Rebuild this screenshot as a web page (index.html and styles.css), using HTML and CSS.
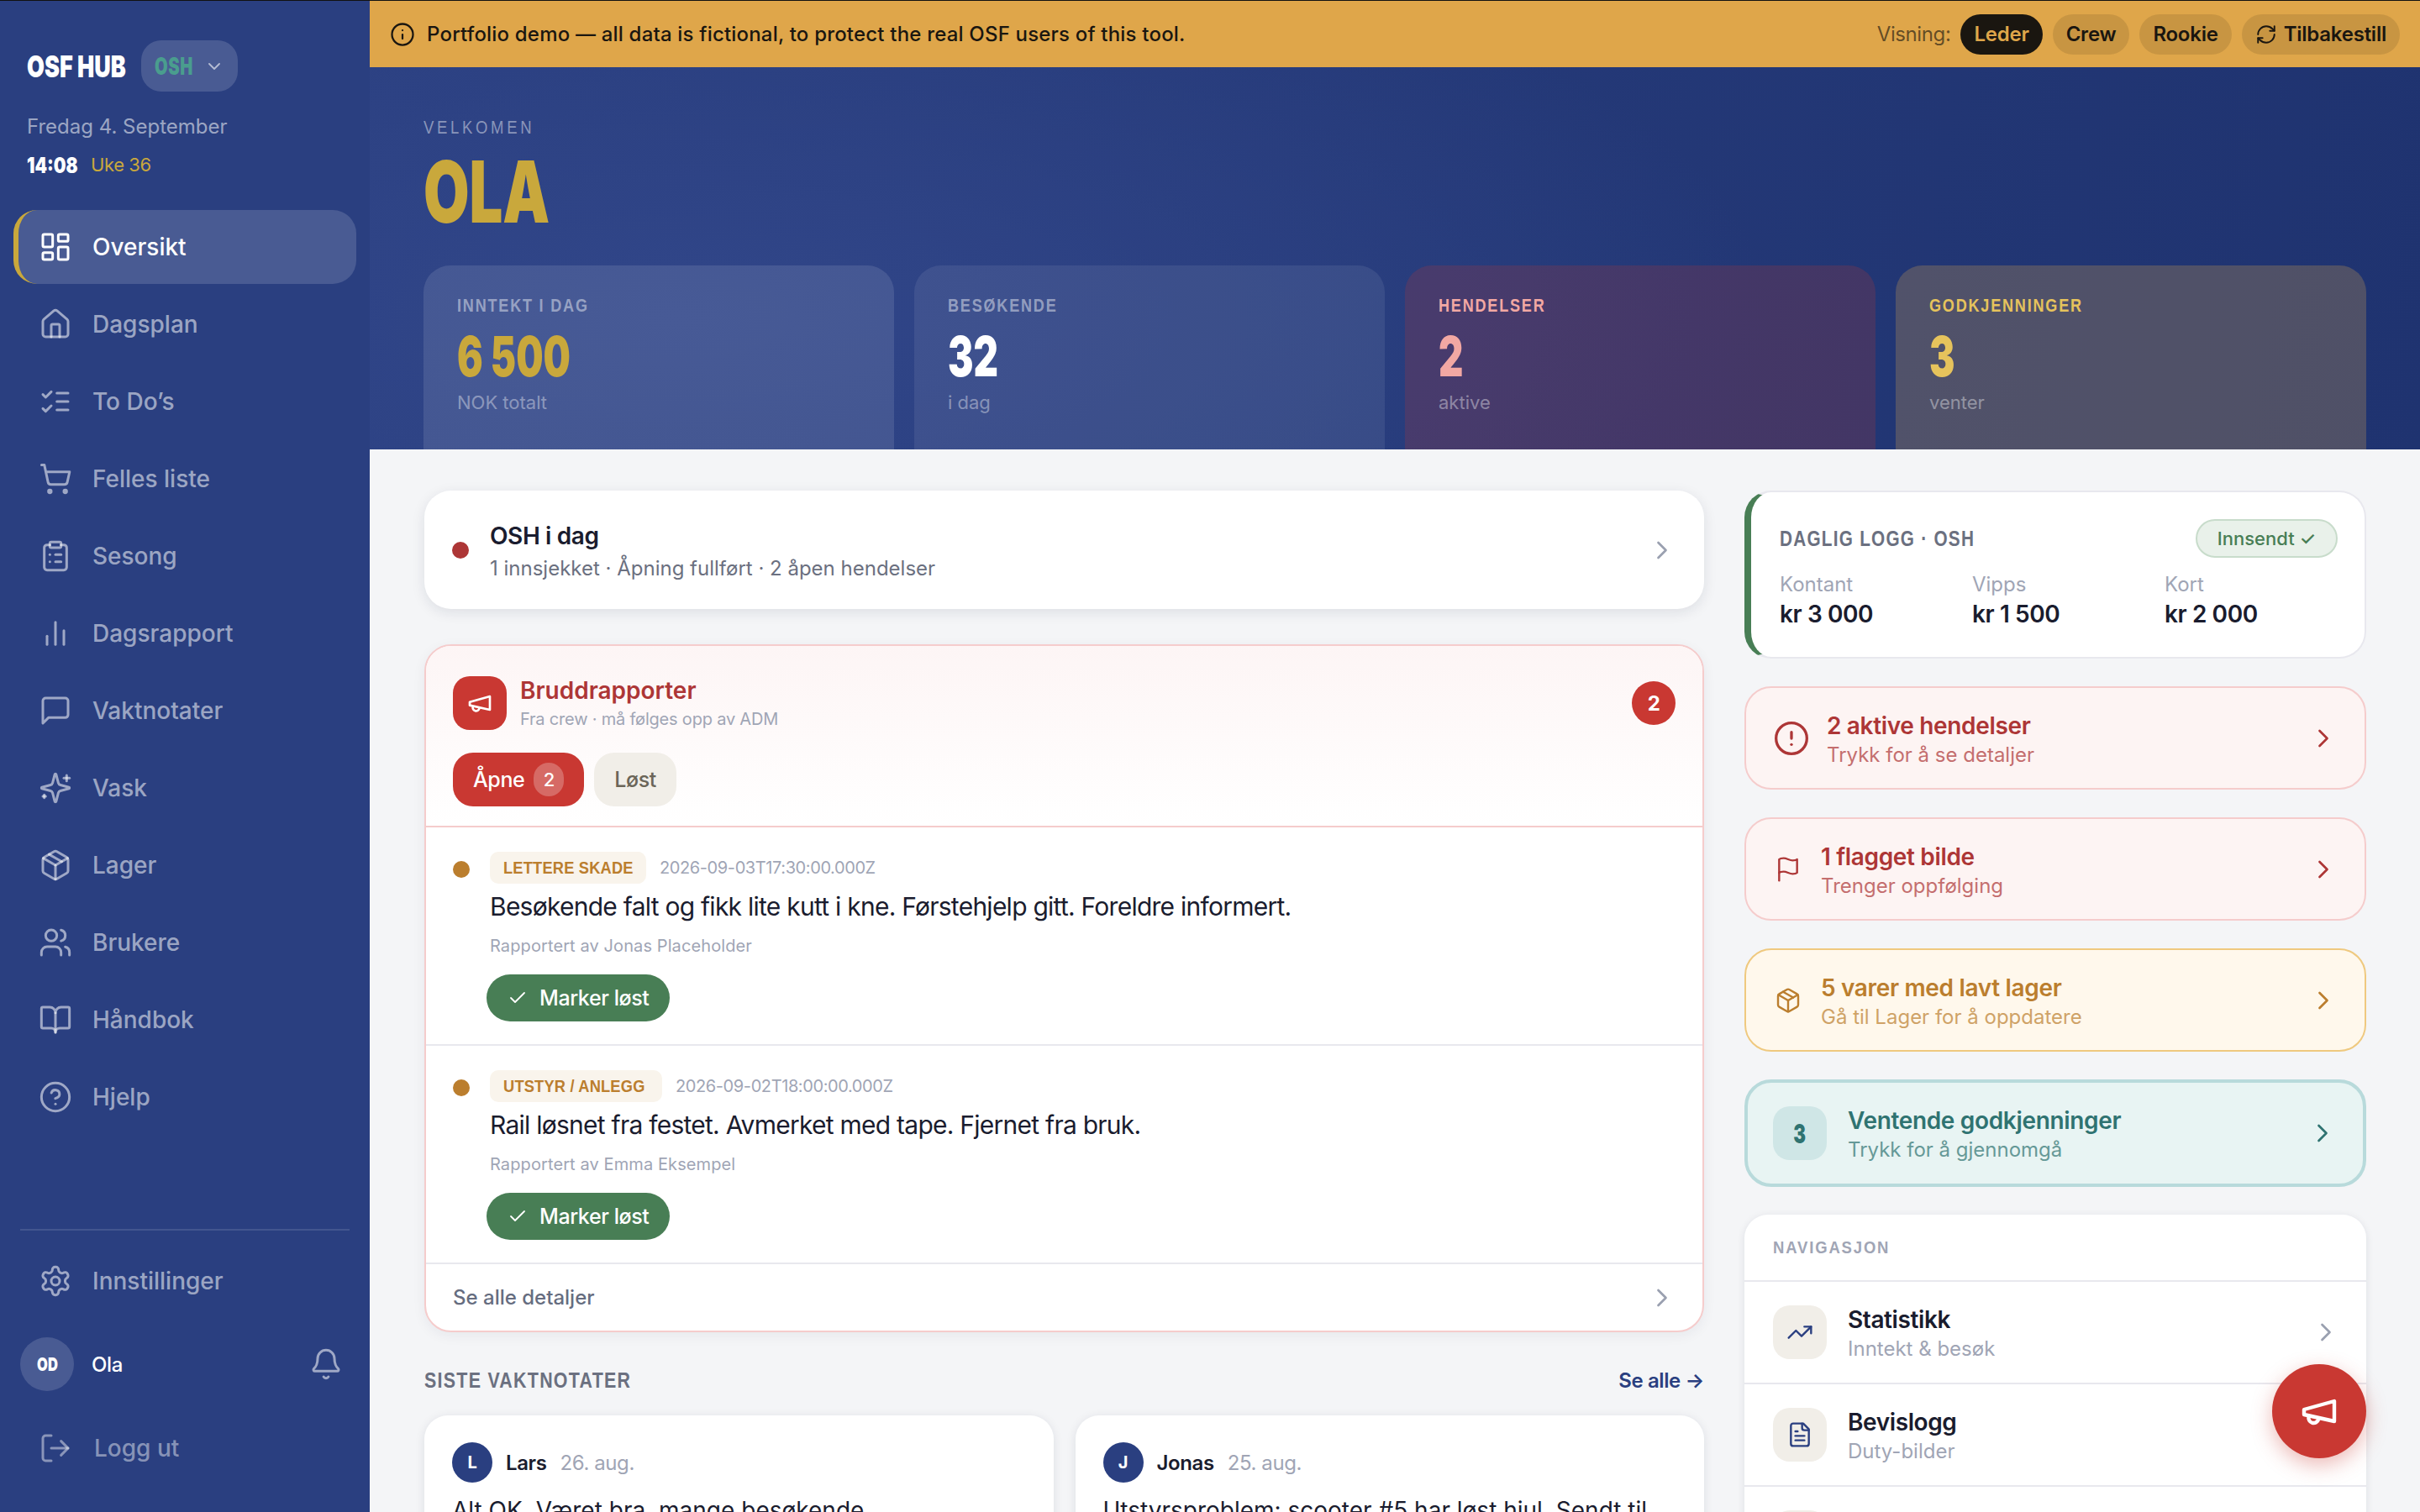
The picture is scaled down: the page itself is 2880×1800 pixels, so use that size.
FILE: index.html
```html
<!DOCTYPE html>
<html lang="no">
<head>
    <meta charset="UTF-8">
    <meta name="viewport" content="width=device-width, initial-scale=1.0">
    <title>OSF Hub</title>
    <link rel="stylesheet" href="styles.css">
</head>
<body>
    <svg class="sprite" xmlns="http://www.w3.org/2000/svg">
        <symbol id="i-dashboard" viewBox="0 0 24 24"><rect x="3" y="3" width="7" height="9" rx="1"/><rect x="14" y="3" width="7" height="5" rx="1"/><rect x="14" y="12" width="7" height="9" rx="1"/><rect x="3" y="16" width="7" height="5" rx="1"/></symbol>
        <symbol id="i-house" viewBox="0 0 24 24"><path d="M15 21v-8a1 1 0 0 0-1-1h-4a1 1 0 0 0-1 1v8"/><path d="M3 10a2 2 0 0 1 .709-1.528l7-5.999a2 2 0 0 1 2.582 0l7 5.999A2 2 0 0 1 21 10v9a2 2 0 0 1-2 2H5a2 2 0 0 1-2-2z"/></symbol>
        <symbol id="i-todo" viewBox="0 0 24 24"><path d="m3 17 2 2 4-4"/><path d="m3 7 2 2 4-4"/><path d="M13 6h8"/><path d="M13 12h8"/><path d="M13 18h8"/></symbol>
        <symbol id="i-cart" viewBox="0 0 24 24"><circle cx="8" cy="21" r="1"/><circle cx="19" cy="21" r="1"/><path d="M2.05 2.05h2l2.66 12.42a2 2 0 0 0 2 1.58h9.78a2 2 0 0 0 1.95-1.57l1.65-7.43H5.12"/></symbol>
        <symbol id="i-clipboard" viewBox="0 0 24 24"><rect x="8" y="2" width="8" height="4" rx="1"/><path d="M16 4h2a2 2 0 0 1 2 2v14a2 2 0 0 1-2 2H6a2 2 0 0 1-2-2V6a2 2 0 0 1 2-2h2"/><path d="M12 11h4"/><path d="M12 16h4"/><path d="M8 11h.01"/><path d="M8 16h.01"/></symbol>
        <symbol id="i-chart" viewBox="0 0 24 24"><path d="M18 20V10"/><path d="M12 20V4"/><path d="M6 20v-6"/></symbol>
        <symbol id="i-message" viewBox="0 0 24 24"><path d="M21 15a2 2 0 0 1-2 2H7l-4 4V5a2 2 0 0 1 2-2h14a2 2 0 0 1 2 2z"/></symbol>
        <symbol id="i-sparkles" viewBox="0 0 24 24"><path d="M9.937 15.5A2 2 0 0 0 8.5 14.063l-6.135-1.582a.5.5 0 0 1 0-.962L8.5 9.936A2 2 0 0 0 9.937 8.5l1.582-6.135a.5.5 0 0 1 .963 0L14.063 8.5A2 2 0 0 0 15.5 9.937l6.135 1.581a.5.5 0 0 1 0 .964L15.5 14.063a2 2 0 0 0-1.437 1.437l-1.582 6.135a.5.5 0 0 1-.963 0z"/><path d="M20 3v4"/><path d="M22 5h-4"/><path d="M4 17v2"/><path d="M5 18H3"/></symbol>
        <symbol id="i-package" viewBox="0 0 24 24"><path d="m7.5 4.27 9 5.15"/><path d="M21 8a2 2 0 0 0-1-1.73l-7-4a2 2 0 0 0-2 0l-7 4A2 2 0 0 0 3 8v8a2 2 0 0 0 1 1.73l7 4a2 2 0 0 0 2 0l7-4A2 2 0 0 0 21 16Z"/><path d="m3.3 7 8.7 5 8.7-5"/><path d="M12 22V12"/></symbol>
        <symbol id="i-users" viewBox="0 0 24 24"><path d="M16 21v-2a4 4 0 0 0-4-4H6a4 4 0 0 0-4 4v2"/><circle cx="9" cy="7" r="4"/><path d="M22 21v-2a4 4 0 0 0-3-3.87"/><path d="M16 3.13a4 4 0 0 1 0 7.75"/></symbol>
        <symbol id="i-book" viewBox="0 0 24 24"><path d="M12 7v14"/><path d="M3 18a1 1 0 0 1-1-1V4a1 1 0 0 1 1-1h5a4 4 0 0 1 4 4 4 4 0 0 1 4-4h5a1 1 0 0 1 1 1v13a1 1 0 0 1-1 1h-6a3 3 0 0 0-3 3 3 3 0 0 0-3-3z"/></symbol>
        <symbol id="i-help" viewBox="0 0 24 24"><circle cx="12" cy="12" r="10"/><path d="M9.09 9a3 3 0 0 1 5.83 1c0 2-3 3-3 3"/><path d="M12 17h.01"/></symbol>
        <symbol id="i-settings" viewBox="0 0 24 24"><path d="M12.22 2h-.44a2 2 0 0 0-2 2v.18a2 2 0 0 1-1 1.73l-.43.25a2 2 0 0 1-2 0l-.15-.08a2 2 0 0 0-2.73.73l-.22.38a2 2 0 0 0 .73 2.73l.15.1a2 2 0 0 1 1 1.72v.51a2 2 0 0 1-1 1.74l-.15.09a2 2 0 0 0-.73 2.73l.22.38a2 2 0 0 0 2.73.73l.15-.08a2 2 0 0 1 2 0l.43.25a2 2 0 0 1 1 1.73V20a2 2 0 0 0 2 2h.44a2 2 0 0 0 2-2v-.18a2 2 0 0 1 1-1.73l.43-.25a2 2 0 0 1 2 0l.15.08a2 2 0 0 0 2.73-.73l.22-.39a2 2 0 0 0-.73-2.73l-.15-.08a2 2 0 0 1-1-1.74v-.5a2 2 0 0 1 1-1.74l.15-.09a2 2 0 0 0 .73-2.73l-.22-.38a2 2 0 0 0-2.73-.73l-.15.08a2 2 0 0 1-2 0l-.43-.25a2 2 0 0 1-1-1.73V4a2 2 0 0 0-2-2z"/><circle cx="12" cy="12" r="3"/></symbol>
        <symbol id="i-logout" viewBox="0 0 24 24"><path d="m16 17 5-5-5-5"/><path d="M21 12H9"/><path d="M9 21H5a2 2 0 0 1-2-2V5a2 2 0 0 1 2-2h4"/></symbol>
        <symbol id="i-bell" viewBox="0 0 24 24"><path d="M10.268 21a2 2 0 0 0 3.464 0"/><path d="M3.262 15.326A1 1 0 0 0 4 17h16a1 1 0 0 0 .74-1.673C19.41 13.956 18 12.499 18 8A6 6 0 0 0 6 8c0 4.499-1.411 5.956-2.738 7.326"/></symbol>
        <symbol id="i-info" viewBox="0 0 24 24"><circle cx="12" cy="12" r="10"/><path d="M12 16v-4"/><path d="M12 8h.01"/></symbol>
        <symbol id="i-refresh" viewBox="0 0 24 24"><path d="M3 12a9 9 0 0 1 9-9 9.75 9.75 0 0 1 6.74 2.74L21 8"/><path d="M21 3v5h-5"/><path d="M21 12a9 9 0 0 1-9 9 9.75 9.75 0 0 1-6.74-2.74L3 16"/><path d="M8 16H3v5"/></symbol>
        <symbol id="i-megaphone" viewBox="0 0 24 24"><path d="m3 11 18-5v12L3 14v-3z"/><path d="M11.6 16.8a3 3 0 1 1-5.8-1.6"/></symbol>
        <symbol id="i-check" viewBox="0 0 24 24"><path d="M20 6 9 17l-5-5"/></symbol>
        <symbol id="i-right" viewBox="0 0 24 24"><path d="m9 18 6-6-6-6"/></symbol>
        <symbol id="i-down" viewBox="0 0 24 24"><path d="m6 9 6 6 6-6"/></symbol>
        <symbol id="i-alert" viewBox="0 0 24 24"><circle cx="12" cy="12" r="10"/><path d="M12 8v4"/><path d="M12 16h.01"/></symbol>
        <symbol id="i-flag" viewBox="0 0 24 24"><path d="M4 15s1-1 4-1 5 2 8 2 4-1 4-1V3s-1 1-4 1-5-2-8-2-4 1-4 1z"/><path d="M4 22v-7"/></symbol>
        <symbol id="i-trend" viewBox="0 0 24 24"><path d="M22 7 13.5 15.5 8.5 10.5 2 17"/><path d="M16 7h6v6"/></symbol>
        <symbol id="i-file" viewBox="0 0 24 24"><path d="M15 2H6a2 2 0 0 0-2 2v16a2 2 0 0 0 2 2h12a2 2 0 0 0 2-2V7Z"/><path d="M14 2v4a2 2 0 0 0 2 2h4"/><path d="M10 9H8"/><path d="M16 13H8"/><path d="M16 17H8"/></symbol>
    </svg>

    <div class="app">
        <!-- Sidebar -->
        <aside class="sidebar">
            <div class="brand">
                <span class="brand-name squeeze">OSF HUB</span>
                <span class="brand-pill"><span class="brand-code squeeze">OSH</span><svg class="icon pill-chevron"><use href="#i-down"/></svg></span>
            </div>
            <div class="side-date">Fredag 4. September</div>
            <div class="side-time"><span class="clock squeeze">14:08</span><span class="week">Uke 36</span></div>

            <nav class="side-nav">
                <a class="nav-item active"><svg class="icon"><use href="#i-dashboard"/></svg>Oversikt</a>
                <a class="nav-item"><svg class="icon"><use href="#i-house"/></svg>Dagsplan</a>
                <a class="nav-item"><svg class="icon"><use href="#i-todo"/></svg>To Do’s</a>
                <a class="nav-item"><svg class="icon"><use href="#i-cart"/></svg>Felles liste</a>
                <a class="nav-item"><svg class="icon"><use href="#i-clipboard"/></svg>Sesong</a>
                <a class="nav-item"><svg class="icon"><use href="#i-chart"/></svg>Dagsrapport</a>
                <a class="nav-item"><svg class="icon"><use href="#i-message"/></svg>Vaktnotater</a>
                <a class="nav-item"><svg class="icon"><use href="#i-sparkles"/></svg>Vask</a>
                <a class="nav-item"><svg class="icon"><use href="#i-package"/></svg>Lager</a>
                <a class="nav-item"><svg class="icon"><use href="#i-users"/></svg>Brukere</a>
                <a class="nav-item"><svg class="icon"><use href="#i-book"/></svg>Håndbok</a>
                <a class="nav-item"><svg class="icon"><use href="#i-help"/></svg>Hjelp</a>
            </nav>

            <div class="side-bottom">
                <a class="nav-item"><svg class="icon"><use href="#i-settings"/></svg>Innstillinger</a>
                <div class="side-user">
                    <span class="user-avatar"><span class="squeeze">OD</span></span>
                    <span class="user-name">Ola</span>
                    <svg class="icon bell"><use href="#i-bell"/></svg>
                </div>
                <a class="nav-item logout"><svg class="icon"><use href="#i-logout"/></svg>Logg ut</a>
            </div>
        </aside>

        <div class="page">
            <!-- Demo banner -->
            <div class="banner">
                <svg class="icon banner-info"><use href="#i-info"/></svg>
                <span class="banner-text">Portfolio demo — all data is fictional, to protect the real OSF users of this tool.</span>
                <div class="view-switch">
                    <span class="view-label">Visning:</span>
                    <button class="view-btn on">Leder</button>
                    <button class="view-btn">Crew</button>
                    <button class="view-btn">Rookie</button>
                    <button class="view-btn"><svg class="icon"><use href="#i-refresh"/></svg>Tilbakestill</button>
                </div>
            </div>

            <!-- Hero -->
            <section class="hero">
                <div class="hero-kicker"><span class="cond">VELKOMEN</span></div>
                <h1 class="hero-name"><span class="squeeze">OLA</span></h1>
                <div class="stats">
                    <div class="stat">
                        <div class="stat-label"><span class="cond">INNTEKT I DAG</span></div>
                        <div class="stat-value gold"><span class="squeeze">6 500</span></div>
                        <div class="stat-sub">NOK totalt</div>
                    </div>
                    <div class="stat dim">
                        <div class="stat-label"><span class="cond">BESØKENDE</span></div>
                        <div class="stat-value"><span class="squeeze">32</span></div>
                        <div class="stat-sub">i dag</div>
                    </div>
                    <div class="stat red">
                        <div class="stat-label"><span class="cond">HENDELSER</span></div>
                        <div class="stat-value"><span class="squeeze">2</span></div>
                        <div class="stat-sub">aktive</div>
                    </div>
                    <div class="stat amber">
                        <div class="stat-label"><span class="cond">GODKJENNINGER</span></div>
                        <div class="stat-value"><span class="squeeze">3</span></div>
                        <div class="stat-sub">venter</div>
                    </div>
                </div>
            </section>

            <main class="content">
                <div class="col-left">
                    <div class="today-card">
                        <span class="today-dot"></span>
                        <div class="today-text">
                            <div class="today-title">OSH i dag</div>
                            <div class="today-sub">1 innsjekket · Åpning fullført · 2 åpen hendelser</div>
                        </div>
                        <svg class="icon chevron"><use href="#i-right"/></svg>
                    </div>

                    <!-- Bruddrapporter -->
                    <div class="breach">
                        <div class="breach-head">
                            <div class="breach-top">
                                <span class="breach-icon"><svg class="icon"><use href="#i-megaphone"/></svg></span>
                                <div class="breach-titles">
                                    <div class="breach-title">Bruddrapporter</div>
                                    <div class="breach-sub">Fra crew · må følges opp av ADM</div>
                                </div>
                                <span class="breach-count">2</span>
                            </div>
                            <div class="tabs">
                                <button class="tab on">Åpne <span class="tab-num">2</span></button>
                                <button class="tab">Løst</button>
                            </div>
                        </div>

                        <div class="report">
                            <span class="report-dot"></span>
                            <div class="report-body">
                                <div class="report-meta"><span class="tag"><span class="cond">LETTERE SKADE</span></span><span class="report-date">2026-09-03T17:30:00.000Z</span></div>
                                <div class="report-text">Besøkende falt og fikk lite kutt i kne. Førstehjelp gitt. Foreldre informert.</div>
                                <div class="report-by">Rapportert av Jonas Placeholder</div>
                                <button class="resolve"><svg class="icon"><use href="#i-check"/></svg>Marker løst</button>
                            </div>
                        </div>
                        <div class="report">
                            <span class="report-dot"></span>
                            <div class="report-body">
                                <div class="report-meta"><span class="tag wide"><span class="cond">UTSTYR / ANLEGG</span></span><span class="report-date">2026-09-02T18:00:00.000Z</span></div>
                                <div class="report-text">Rail løsnet fra festet. Avmerket med tape. Fjernet fra bruk.</div>
                                <div class="report-by">Rapportert av Emma Eksempel</div>
                                <button class="resolve"><svg class="icon"><use href="#i-check"/></svg>Marker løst</button>
                            </div>
                        </div>
                        <div class="breach-foot">
                            <span>Se alle detaljer</span>
                            <svg class="icon chevron"><use href="#i-right"/></svg>
                        </div>
                    </div>

                    <div class="section-head">
                        <span class="section-title"><span class="cond">SISTE VAKTNOTATER</span></span>
                        <a class="section-link">Se alle →</a>
                    </div>
                    <div class="notes">
                        <div class="note">
                            <div class="note-head"><span class="note-avatar">L</span><span class="note-name">Lars</span><span class="note-date">26. aug.</span></div>
                            <div class="note-text">Alt OK. Været bra, mange besøkende.</div>
                        </div>
                        <div class="note">
                            <div class="note-head"><span class="note-avatar">J</span><span class="note-name">Jonas</span><span class="note-date">25. aug.</span></div>
                            <div class="note-text">Utstyrsproblem: scooter #5 har løst hjul. Sendt til</div>
                        </div>
                    </div>
                </div>

                <div class="col-right">
                    <div class="log-card">
                        <div class="log-head">
                            <span class="log-title"><span class="cond">DAGLIG LOGG · OSH</span></span>
                            <span class="log-pill">Innsendt ✓</span>
                        </div>
                        <div class="log-grid">
                            <div><div class="log-label">Kontant</div><div class="log-value">kr 3 000</div></div>
                            <div><div class="log-label">Vipps</div><div class="log-value">kr 1 500</div></div>
                            <div><div class="log-label">Kort</div><div class="log-value">kr 2 000</div></div>
                        </div>
                    </div>

                    <div class="alert danger">
                        <svg class="icon alert-icon big"><use href="#i-alert"/></svg>
                        <div class="alert-text"><div class="alert-title">2 aktive hendelser</div><div class="alert-sub">Trykk for å se detaljer</div></div>
                        <svg class="icon chevron"><use href="#i-right"/></svg>
                    </div>
                    <div class="alert danger">
                        <svg class="icon alert-icon"><use href="#i-flag"/></svg>
                        <div class="alert-text"><div class="alert-title">1 flagget bilde</div><div class="alert-sub">Trenger oppfølging</div></div>
                        <svg class="icon chevron"><use href="#i-right"/></svg>
                    </div>
                    <div class="alert warn">
                        <svg class="icon alert-icon"><use href="#i-package"/></svg>
                        <div class="alert-text"><div class="alert-title">5 varer med lavt lager</div><div class="alert-sub">Gå til Lager for å oppdatere</div></div>
                        <svg class="icon chevron"><use href="#i-right"/></svg>
                    </div>
                    <div class="alert teal">
                        <span class="alert-num"><span class="squeeze">3</span></span>
                        <div class="alert-text"><div class="alert-title">Ventende godkjenninger</div><div class="alert-sub">Trykk for å gjennomgå</div></div>
                        <svg class="icon chevron"><use href="#i-right"/></svg>
                    </div>

                    <div class="nav-card">
                        <div class="nav-card-head"><span class="cond">NAVIGASJON</span></div>
                        <div class="nav-row">
                            <span class="nav-tile"><svg class="icon"><use href="#i-trend"/></svg></span>
                            <div class="nav-row-text"><div class="nav-row-title">Statistikk</div><div class="nav-row-sub">Inntekt &amp; besøk</div></div>
                            <svg class="icon chevron"><use href="#i-right"/></svg>
                        </div>
                        <div class="nav-row">
                            <span class="nav-tile"><svg class="icon"><use href="#i-file"/></svg></span>
                            <div class="nav-row-text"><div class="nav-row-title">Bevislogg</div><div class="nav-row-sub">Duty-bilder</div></div>
                            <svg class="icon chevron"><use href="#i-right"/></svg>
                        </div>
                        <div class="nav-row">
                            <span class="nav-tile"></span>
                        </div>
                    </div>
                </div>
            </main>
        </div>
    </div>

    <button class="fab"><svg class="icon"><use href="#i-megaphone"/></svg></button>
</body>
</html>
```

FILE: styles.css
```css
* {
    box-sizing: border-box;
}

body, html {
    margin: 0;
    height: 100%;
    overflow: hidden;
    background-color: #f4f5f7;
    font-family: Inter, "Liberation Sans", sans-serif;
    letter-spacing: -0.025em;
    color: #1a1c2e;
}

button {
    font: inherit;
    letter-spacing: inherit;
    border: none;
}

.sprite {
    display: none;
}

.icon {
    width: 40px;
    height: 40px;
    flex-shrink: 0;
    fill: none;
    stroke: currentColor;
    stroke-width: 1.8;
    stroke-linecap: round;
    stroke-linejoin: round;
}

/* condensed display text: no condensed face is installed */
.squeeze {
    display: inline-block;
    font-family: Inter, sans-serif;
    font-weight: 900;
    letter-spacing: 0;
    white-space: nowrap;
    transform: scaleX(0.69);
    transform-origin: left center;
}

/* condensed label text */
.cond {
    display: inline-block;
    font-family: "Liberation Sans", sans-serif;
    font-weight: 700;
    white-space: nowrap;
    transform: scaleX(0.82);
    transform-origin: left center;
}

.app {
    display: flex;
    height: 100vh;
    border-top: 1px solid #111;
}

/* Sidebar */
.sidebar {
    width: 440px;
    flex-shrink: 0;
    display: flex;
    flex-direction: column;
    background-color: #2a3f80;
    color: #fff;
}

.brand {
    display: flex;
    align-items: center;
    gap: 16px;
    margin: 47px 0 0 32px;
}

.brand-name {
    width: 120px;
    font-size: 36px;
    transform: scaleX(0.75);
}

.brand-pill {
    display: flex;
    align-items: center;
    justify-content: space-between;
    width: 115px;
    height: 61px;
    padding: 0 16px;
    border-radius: 24px;
    background-color: rgba(255, 255, 255, 0.15);
}

.brand-code {
    width: 45px;
    font-size: 28px;
    letter-spacing: 0.03em;
    color: #4a9d8e;
    transform: scaleX(0.72);
}

.pill-chevron {
    width: 24px;
    height: 24px;
    color: rgba(255, 255, 255, 0.6);
}

.side-date {
    margin: 27px 0 0 32px;
    font-size: 24px;
    line-height: 30px;
    letter-spacing: 0;
    color: rgba(255, 255, 255, 0.55);
}

.side-time {
    display: flex;
    align-items: center;
    gap: 16px;
    height: 30px;
    margin: 15px 0 0 32px;
}

.clock {
    width: 60px;
    font-size: 26px;
    transform: scaleX(0.8);
}

.week {
    font-size: 22px;
    color: #c9a83c;
}

.side-nav {
    flex: 1;
    margin-top: 39px;
}

.nav-item {
    display: flex;
    align-items: center;
    gap: 24px;
    height: 88px;
    margin: 0 16px 4px;
    padding-left: 24px;
    border-left: 6px solid transparent;
    border-radius: 28px;
    font-size: 28px;
    font-weight: 500;
    letter-spacing: 0;
    color: rgba(255, 255, 255, 0.55);
}

.nav-item.active {
    background-color: rgba(255, 255, 255, 0.15);
    border-left-color: #c9a83c;
    color: #fff;
}

.side-bottom {
    margin: 0 24px 32px;
    padding-top: 16px;
    border-top: 2px solid rgba(255, 255, 255, 0.12);
}

.side-bottom .nav-item {
    margin: 0 -8px;
}

.side-user {
    display: flex;
    align-items: center;
    margin-top: 23px;
    height: 64px;
}

.user-avatar {
    width: 64px;
    height: 64px;
    display: flex;
    align-items: center;
    justify-content: center;
    border-radius: 50%;
    background-color: rgba(255, 255, 255, 0.15);
    font-size: 22px;
}

.user-avatar .squeeze {
    transform: scaleX(0.75);
    transform-origin: center;
}

.user-name {
    flex: 1;
    margin-left: 21px;
    font-size: 24px;
    font-weight: 500;
}

.bell {
    margin-right: 8px;
    color: rgba(255, 255, 255, 0.55);
}

.side-bottom .side-user + .nav-item {
    margin-top: 24px;
}

.logout {
    color: rgba(255, 255, 255, 0.45);
    gap: 26px;
}

/* Page */
.page {
    flex: 1;
    min-width: 0;
    overflow: hidden;
}

.banner {
    display: flex;
    align-items: center;
    height: 79px;
    padding: 0 24px;
    background-color: #dfa64a;
    color: #1a1610;
}

.banner-info {
    width: 30px;
    height: 30px;
}

.banner-text {
    flex: 1;
    margin-left: 14px;
    font-size: 24px;
    font-weight: 500;
    letter-spacing: 0.008em;
}

.view-switch {
    display: flex;
    align-items: center;
    gap: 12px;
    font-size: 24px;
}

.view-label {
    color: rgba(26, 22, 16, 0.65);
}

.view-btn {
    display: flex;
    align-items: center;
    gap: 8px;
    height: 48px;
    padding: 0 16px;
    border-radius: 24px;
    background-color: rgba(0, 0, 0, 0.1);
    color: #1a1610;
    font-size: 24px;
    font-weight: 600;
    letter-spacing: -0.01em;
}

.view-btn .icon {
    width: 26px;
    height: 26px;
}

.view-btn.on {
    background-color: #1a1610;
    color: #dfa64a;
}

.hero {
    height: 455px;
    padding: 59px 64px 0;
    overflow: hidden;
    background: radial-gradient(ellipse 1300px 500px at 15% 65%, #314689, transparent), linear-gradient(100deg, #2a3f80, #1f3370);
}

.hero-kicker {
    font-size: 22px;
    line-height: 24px;
    letter-spacing: 0.2em;
    color: rgba(255, 255, 255, 0.45);
}

.hero-kicker .cond {
    font-weight: 400;
    transform: scaleX(0.84);
}

.hero-name {
    margin: 5px 0 0;
    height: 118px;
    font-size: 102px;
    line-height: 118px;
    font-weight: 900;
    color: #c9a83c;
}

.stats {
    display: grid;
    grid-template-columns: repeat(4, 1fr);
    gap: 24px;
    margin-top: 29px;
}

.stat {
    height: 260px;
    padding: 32px 40px;
    border-radius: 32px;
    background-color: rgba(255, 255, 255, 0.11);
}

.stat.dim {
    background-color: rgba(255, 255, 255, 0.08);
}

.stat.red {
    background-color: rgba(200, 55, 47, 0.2);
}

.stat.amber {
    background-color: rgba(223, 166, 74, 0.25);
}

.stat-label {
    font-size: 22px;
    line-height: 30px;
    letter-spacing: 0.1em;
    color: rgba(255, 255, 255, 0.45);
}

.stat.red .stat-label {
    color: #f2a8a3;
}

.stat.amber .stat-label {
    color: #e6c35c;
}

.stat-value {
    height: 74px;
    margin-top: 8px;
    font-size: 66px;
    line-height: 74px;
    color: #fff;
}

.stat-value.gold {
    color: #c9a83c;
}

.stat.red .stat-value {
    color: #f2a8a3;
}

.stat.amber .stat-value {
    color: #e6c35c;
}

.stat-sub {
    margin-top: 4px;
    font-size: 22px;
    line-height: 28px;
    letter-spacing: 0;
    color: rgba(255, 255, 255, 0.4);
}

.content {
    display: grid;
    grid-template-columns: 1fr 740px;
    gap: 48px;
    padding: 49px 64px 0 65px;
}

/* Left column */
.today-card {
    display: flex;
    align-items: center;
    height: 141px;
    padding: 0 32px 0 33px;
    border-radius: 32px;
    background-color: #fff;
    box-shadow: 0 4px 16px rgba(20, 30, 60, 0.1);
}

.today-dot {
    width: 20px;
    height: 20px;
    border-radius: 50%;
    background-color: #ad3636;
}

.today-text {
    flex: 1;
    margin-left: 25px;
    padding-top: 3px;
}

.today-title {
    font-size: 28px;
    line-height: 36px;
    font-weight: 600;
}

.today-sub {
    margin-top: 5px;
    font-size: 24px;
    line-height: 32px;
    letter-spacing: 0;
    color: #6b7080;
}

.chevron {
    width: 36px;
    height: 36px;
    color: #9aa0b0;
}

.breach {
    margin-top: 42px;
    border: 2px solid #f5cccc;
    border-radius: 32px;
    background-color: #fff;
    box-shadow: 0 4px 16px rgba(20, 30, 60, 0.06);
    overflow: hidden;
}

.breach-head {
    height: 216px;
    padding: 36px 32px 0;
    background: linear-gradient(#fdf5f5, #fff);
    border-bottom: 2px solid #f5cccc;
}

.breach-top {
    display: flex;
    align-items: center;
    gap: 16px;
}

.breach-icon {
    width: 64px;
    height: 64px;
    display: flex;
    align-items: center;
    justify-content: center;
    border-radius: 20px;
    background-color: #c93832;
    color: #fff;
}

.breach-icon .icon {
    width: 32px;
    height: 32px;
    stroke-width: 2;
}

.breach-titles {
    flex: 1;
    height: 64px;
}

.breach-title {
    font-size: 28px;
    line-height: 34px;
    font-weight: 600;
    letter-spacing: 0;
    color: #ad3636;
}

.breach-sub {
    margin-top: 4px;
    font-size: 20px;
    line-height: 26px;
    letter-spacing: -0.01em;
    color: #a0a5b5;
}

.breach-count {
    width: 52px;
    height: 52px;
    display: flex;
    align-items: center;
    justify-content: center;
    border-radius: 50%;
    background-color: #c93832;
    color: #fff;
    font-size: 24px;
    font-weight: 700;
}

.tabs {
    display: flex;
    gap: 12px;
    margin-top: 27px;
}

.tab {
    display: flex;
    align-items: center;
    gap: 11px;
    height: 64px;
    padding: 0 24px;
    border-radius: 24px;
    background-color: #f1eee8;
    color: #6b6558;
    font-size: 25px;
    font-weight: 500;
}

.tab.on {
    background-color: #c93832;
    color: #fff;
}

.tab-num {
    width: 36px;
    height: 40px;
    display: flex;
    align-items: center;
    justify-content: center;
    border-radius: 18px;
    background-color: rgba(255, 255, 255, 0.25);
    font-size: 22px;
}

.report {
    display: flex;
    gap: 24px;
    padding: 29px 32px 27px;
    border-bottom: 2px solid #e8e8ee;
}

.report-dot {
    width: 20px;
    height: 20px;
    margin-top: 11px;
    flex-shrink: 0;
    border-radius: 50%;
    background-color: #bb7e2e;
}

.report-meta {
    display: flex;
    align-items: center;
    gap: 16px;
}

.tag {
    display: flex;
    align-items: center;
    width: 186px;
    height: 38px;
    padding: 0 16px;
    border-radius: 10px;
    background-color: #f9f4ec;
    color: #bb7e2e;
    font-size: 21px;
    letter-spacing: 0.01em;
}

.tag.wide {
    width: 205px;
}

.tag .cond {
    transform: scaleX(0.87);
}

.report-date {
    font-size: 20px;
    letter-spacing: -0.02em;
    color: #a0a5b5;
}

.report-text {
    margin-top: 6px;
    font-size: 30px;
    line-height: 42px;
    letter-spacing: -0.025em;
}

.report-by {
    margin-top: 12px;
    font-size: 20px;
    line-height: 28px;
    letter-spacing: 0.005em;
    color: #a0a5b5;
}

.resolve {
    display: flex;
    align-items: center;
    gap: 14px;
    height: 56px;
    margin: 20px 0 0 -4px;
    padding: 0 25px;
    border-radius: 28px;
    background-color: #487e55;
    color: #fff;
    font-size: 25px;
    font-weight: 500;
}

.resolve .icon {
    width: 24px;
    height: 24px;
}

.breach-foot {
    display: flex;
    align-items: center;
    justify-content: space-between;
    height: 79px;
    padding: 0 30px 0 32px;
    font-size: 24px;
    font-weight: 500;
    letter-spacing: 0;
    color: #666d80;
}

.section-head {
    display: flex;
    align-items: center;
    justify-content: space-between;
    height: 28px;
    margin-top: 43px;
}

.section-title {
    font-size: 25px;
    letter-spacing: 0.06em;
    color: #6b7080;
}

.section-title .cond {
    transform: scaleX(0.855);
}

.section-link {
    font-size: 24px;
    font-weight: 600;
    color: #2a3f80;
}

.notes {
    display: grid;
    grid-template-columns: 1fr 1fr;
    gap: 26px;
    margin-top: 28px;
}

.note {
    height: 300px;
    padding: 32px 33px;
    border-radius: 28px;
    background-color: #fff;
    box-shadow: 0 2px 12px rgba(20, 30, 60, 0.1);
}

.note-head {
    display: flex;
    align-items: center;
    gap: 16px;
}

.note-avatar {
    width: 48px;
    height: 48px;
    display: flex;
    align-items: center;
    justify-content: center;
    border-radius: 50%;
    background-color: #2a3f80;
    color: #fff;
    font-size: 20px;
    font-weight: 700;
}

.note-name {
    font-size: 24px;
    font-weight: 600;
}

.note-date {
    font-size: 24px;
    color: #a0a5b5;
}

.note-text {
    margin-top: 14px;
    font-size: 28px;
    line-height: 38px;
    letter-spacing: 0;
}

/* Right column */
.log-card {
    height: 200px;
    padding: 32px 32px 0 34px;
    border: 2px solid #e8e8ee;
    border-left: 8px solid #487e55;
    border-radius: 32px;
    background-color: #fff;
}

.log-head {
    display: flex;
    align-items: center;
    justify-content: space-between;
    height: 46px;
}

.log-title {
    font-size: 25px;
    letter-spacing: 0.06em;
    color: #6b7080;
}

.log-title .cond {
    transform: scaleX(0.83);
}

.log-pill {
    display: flex;
    align-items: center;
    height: 46px;
    padding: 0 24px;
    border: 2px solid #c8dccb;
    border-radius: 23px;
    background-color: #e9f1ea;
    color: #487e55;
    font-size: 22px;
    font-weight: 500;
    letter-spacing: 0;
}

.log-grid {
    display: grid;
    grid-template-columns: repeat(3, 229px);
    margin-top: 16px;
}

.log-label {
    font-size: 24px;
    line-height: 32px;
    letter-spacing: 0;
    color: #a0a5b5;
}

.log-value {
    font-size: 28px;
    line-height: 38px;
    font-weight: 600;
}

.alert {
    display: flex;
    align-items: center;
    height: 123px;
    margin-top: 33px;
    padding: 0 31px 0 34px;
    border: 2px solid;
    border-radius: 32px;
}

.alert-icon {
    width: 32px;
    height: 32px;
}

.alert-icon.big {
    width: 44px;
    height: 44px;
    margin-left: -2px;
}

.alert-text {
    flex: 1;
    margin-left: 23px;
    padding-top: 3px;
}

.alert-icon.big + .alert-text {
    margin-left: 20px;
}

.alert-title {
    font-size: 28px;
    line-height: 36px;
    font-weight: 600;
    letter-spacing: -0.012em;
}

.alert-sub {
    margin-top: 1px;
    font-size: 24px;
    line-height: 32px;
    letter-spacing: 0;
    opacity: 0.7;
}

.alert .chevron {
    color: inherit;
}

.alert.danger {
    background-color: #fdf4f3;
    border-color: #f5cccc;
    color: #ad3636;
}

.alert.warn {
    background-color: #fff8ec;
    border-color: #efc97f;
    color: #bb7e2e;
}

.alert.teal {
    height: 128px;
    padding: 0 30px;
    border-width: 4px;
    background-color: #e8f4f3;
    border-color: #b8dadb;
    color: #2f7371;
}

.alert.teal .alert-text {
    margin-left: 25px;
}

.alert-num {
    width: 64px;
    height: 64px;
    display: flex;
    align-items: center;
    justify-content: center;
    border-radius: 20px;
    background-color: #cfe6e6;
    font-size: 32px;
}

.alert-num .squeeze {
    transform-origin: center;
}

.nav-card {
    margin-top: 33px;
    border-radius: 28px;
    background-color: #fff;
    box-shadow: 0 2px 10px rgba(20, 30, 60, 0.1);
}

.nav-card-head {
    display: flex;
    align-items: center;
    height: 80px;
    padding-left: 34px;
    border-bottom: 2px solid #e8e8ee;
    font-size: 21px;
    letter-spacing: 0.1em;
    color: #a0a5b5;
}

.nav-card-head .cond {
    transform: scaleX(0.88);
}

.nav-row {
    display: flex;
    align-items: center;
    height: 122px;
    padding: 0 30px 0 34px;
    border-bottom: 2px solid #e8e8ee;
}

.nav-tile {
    width: 64px;
    height: 64px;
    display: flex;
    align-items: center;
    justify-content: center;
    border-radius: 20px;
    background-color: #f1eee8;
    color: #2a3f80;
}

.nav-tile .icon {
    width: 32px;
    height: 32px;
}

.nav-row-text {
    flex: 1;
    margin-left: 25px;
    padding-top: 2px;
}

.nav-row-title {
    font-size: 28px;
    line-height: 36px;
    font-weight: 600;
}

.nav-row-sub {
    margin-top: 1px;
    font-size: 24px;
    line-height: 32px;
    letter-spacing: 0;
    color: #a0a5b5;
}

/* Floating button */
.fab {
    position: fixed;
    right: 64px;
    bottom: 64px;
    width: 112px;
    height: 112px;
    display: flex;
    align-items: center;
    justify-content: center;
    border-radius: 50%;
    background-color: #c93832;
    color: #fff;
    box-shadow: 0 8px 24px rgba(201, 56, 50, 0.35);
}

.fab .icon {
    width: 48px;
    height: 48px;
    stroke-width: 2.2;
}
```
